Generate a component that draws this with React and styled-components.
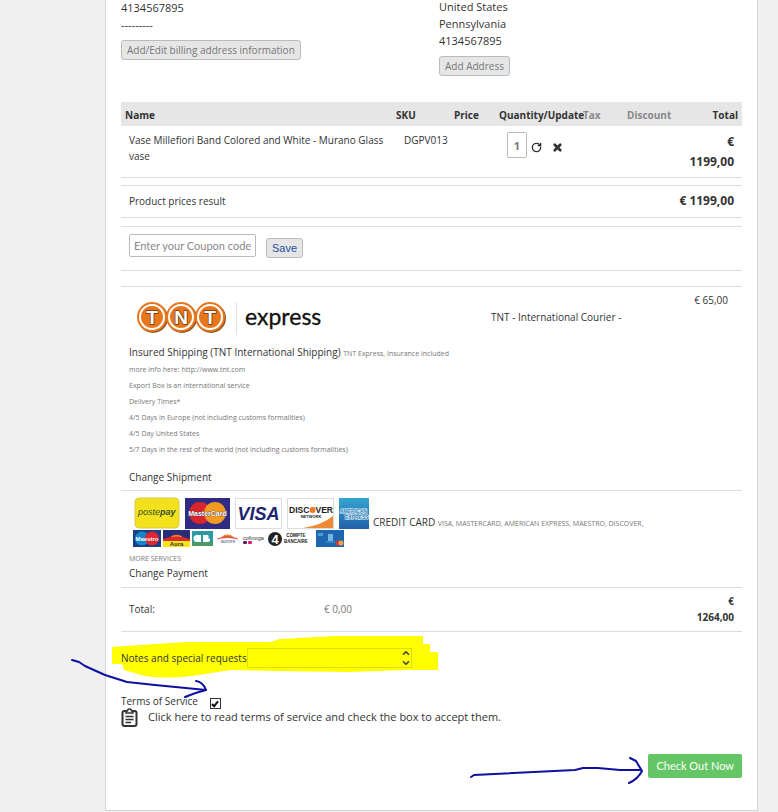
import React, { useState } from "react";
import styled, { createGlobalStyle } from "styled-components";
import { RotateCw, X, ChevronUp, ChevronDown } from "lucide-react";

const GlobalStyle = createGlobalStyle`
  * {
    box-sizing: border-box;
  }

  body {
    margin: 0;
    background: #f0f0f0;
    color: #333;
    font-family: "Open Sans", sans-serif;
    font-size: 10px;
    line-height: 16px;
  }
`;

const Panel = styled.main`
  margin: 0 20px 0 105px;
  padding: 0 15px 32px;
  background: #fff;
  border: 1px solid #d4d4d4;
  border-top: none;
`;

const Addresses = styled.section`
  display: grid;
  grid-template-columns: 1fr 1fr;
  gap: 15px;
  margin-top: -2px;
  padding-bottom: 26px;
  font-size: 11px;
  line-height: 17px;
`;

const Address = styled.address`
  font-style: normal;
  padding-top: ${(props) => (props.$lowered ? "1px" : "0")};
`;

const GrayButton = styled.button`
  display: block;
  height: 20px;
  margin-top: ${(props) => (props.$inline ? "4px" : "7px")};
  padding: 0 5px;
  border: 1px solid #bbb;
  border-radius: 3px;
  background: #e6e6e6;
  color: ${(props) => props.$color || "#777"};
  font-family: ${(props) =>
    props.$inline ? '"Liberation Sans", sans-serif' : '"Open Sans", sans-serif'};
  font-size: ${(props) => (props.$inline ? "11px" : "10px")};
  line-height: 18px;
`;

const Items = styled.table`
  width: 100%;
  table-layout: fixed;
  border-collapse: collapse;
  border-bottom: 1px solid #ddd;

  th {
    height: 24px;
    padding: 2px 4px 0;
    background: #e6e6e6;
    text-align: left;
    white-space: nowrap;
  }

  td {
    height: 51px;
    padding: 6px 8px 4px;
    vertical-align: top;
    line-height: 16px;
  }

  td:nth-child(2) {
    padding-left: 12px;
    padding-right: 0;
  }

  th:last-child,
  td:last-child {
    text-align: right;
  }
`;

const Th = styled.th`
  width: ${(props) => props.$width};
  color: ${(props) => (props.$muted ? "#888" : "#333")};
`;

const Price = styled.strong`
  display: block;
  font-size: 12px;
  line-height: 20px;
  white-space: ${(props) => (props.$wrap ? "normal" : "nowrap")};
`;

const Quantity = styled.div`
  display: flex;
  align-items: center;
  gap: 4px;
  padding-left: 4px;

  input {
    flex: none;
    width: 20px;
    height: 26px;
    padding: 0;
    border: 1px solid #bbb;
    border-radius: 2px;
    color: #777;
    font: bold 11px "Open Sans", sans-serif;
    text-align: center;
  }
`;

const IconButton = styled.button`
  display: flex;
  padding: 4px 0 0;
  margin-right: 6px;
  border: none;
  background: none;
  color: #333;
`;

const Row = styled.section`
  display: flex;
  justify-content: space-between;
  align-items: center;
  margin-top: ${(props) => props.$gap || "0"};
  padding: ${(props) => props.$padding || "0 8px"};
  min-height: ${(props) => props.$height};
  border-top: ${(props) => (props.$joined ? "none" : "1px solid #ddd")};
  border-bottom: 1px solid #ddd;
`;

const Coupon = styled.form`
  display: flex;
  align-items: flex-start;
  gap: 10px;

  input {
    width: 127px;
    height: 23px;
    padding: 0 4px;
    border: 1px solid #bbb;
    border-radius: 2px;
    font: 11px Lato, sans-serif;
  }

  input::placeholder {
    color: #888;
    opacity: 1;
  }
`;

const Shipment = styled.section`
  display: grid;
  grid-template-columns: 1fr 243px;
  margin-top: 15px;
  padding: 5px 8px;
  border-top: 1px solid #ddd;
  border-bottom: 1px solid #ddd;
`;

const Courier = styled.div`
  display: flex;
  justify-content: space-between;
  padding-right: 6px;

  span:first-child {
    padding-top: 17px;
  }
`;

const Logo = styled.svg`
  display: block;
  margin: 3px 0 7px;
`;

const Small = styled.small`
  color: #777;
  font-size: 7px;
  line-height: 1;
`;

const Details = styled.div`
  margin-bottom: 13px;
  white-space: nowrap;

  p {
    margin: 0;
  }
`;

const TextLink = styled.a`
  display: block;
  color: #333;
  line-height: 16px;
  text-decoration: none;
`;

const Payment = styled.section`
  padding: 6px 8px;
  border-bottom: 1px solid #ddd;
  line-height: 15px;
`;

const Method = styled.div`
  display: flex;
  align-items: center;
  gap: 4px;
  margin-bottom: 2px;
  padding-left: 4px;
  white-space: nowrap;
`;

const Totals = styled.div`
  display: grid;
  grid-template-columns: 223px 1fr;
  justify-items: end;
  flex: 1;
  align-items: center;

  div {
    display: flex;
    justify-content: space-between;
    width: 100%;
  }

  span {
    color: #777;
  }

  strong {
    width: 40px;
    text-align: right;
  }
`;

const Notes = styled.section`
  position: relative;
  display: flex;
  align-items: center;
  height: 20px;
  margin-top: 16px;

  label {
    position: relative;
  }
`;

const NotesField = styled.div`
  position: relative;
  width: 165px;
  height: 20px;

  textarea {
    display: block;
    width: 100%;
    height: 100%;
    padding: 2px 18px 2px 4px;
    border: 1px solid #e0e000;
    background: none;
    resize: none;
    overflow: hidden;
    font: 10px "Open Sans", sans-serif;
  }
`;

const Scroller = styled.span`
  position: absolute;
  top: 0;
  right: 1px;
  display: flex;
  flex-direction: column;
  color: #444;
`;

const Ink = styled.svg`
  position: absolute;
  left: ${(props) => props.$left};
  top: ${(props) => props.$top};
  pointer-events: none;
  overflow: visible;
`;

const Terms = styled.section`
  padding-top: 25px;
`;

const Agree = styled.div`
  display: flex;
  align-items: flex-start;
  gap: 12px;
  height: 15px;

  input {
    display: grid;
    place-items: center;
    appearance: none;
    width: 11px;
    height: 11px;
    margin: 5px 0 0;
    border: 1px solid #333;
    background: #fff;
  }

  input:checked::after {
    content: "";
    width: 2px;
    height: 5px;
    border: solid #111;
    border-width: 0 2px 2px 0;
    transform: rotate(40deg);
  }
`;

const TermsLink = styled.a`
  display: flex;
  align-items: center;
  gap: 10px;
  color: #333;
  font-size: 11px;
  line-height: 18px;
  text-decoration: none;
`;

const Actions = styled.div`
  position: relative;
  display: flex;
  justify-content: flex-end;
  margin-top: 27px;
`;

const CheckoutButton = styled.button`
  height: 24px;
  padding: 0 8px;
  border: none;
  border-radius: 2px;
  background: #64c664;
  color: #fff;
  font: 11px Lato, sans-serif;
`;

function ClipboardIcon() {
  return (
    <svg width="17" height="19" viewBox="0 0 17 19" fill="none" stroke="#333" strokeWidth="2" aria-hidden="true">
      <rect x="1.500" y="3" width="14" height="15" rx="2" />
      <path d="M5 5V3H6.500A2 2 0 0 1 10.500 3H12V5Z" fill="#fff" strokeWidth="1.500" />
      <path d="M4.500 8.500H12.500M4.500 11.500H12.500M4.500 14.500H10" strokeWidth="1.500" />
    </svg>
  );
}

function TntLogo() {
  return (
    <Logo width="200" height="42" viewBox="129 295 200 42" role="img" aria-label="TNT express">
      {[152, 181, 210].map((x) => (
        <g key={x}>
          <circle cx={x + 1} cy="318" r="15" fill="#8a5420" />
          <circle cx={x} cy="317" r="15" fill="#e8761c" />
          <circle cx={x} cy="317" r="12" fill="#e8761c" stroke="#fff" strokeWidth="2" />
        </g>
      ))}
      <g
        fontFamily="Liberation Sans, sans-serif"
        fontWeight="bold"
        fontSize="19"
        textAnchor="middle"
        fill="#fff"
        stroke="#6b3a12"
        strokeWidth="1.500"
        paintOrder="stroke"
      >
        <text x="152" y="324">T</text>
        <text x="181" y="324">N</text>
        <text x="210" y="324">T</text>
      </g>
      <path d="M236.500 302V335" stroke="#e2e2e2" />
      <text x="245" y="325" fontFamily="Lato, sans-serif" fontSize="23" fill="#111" stroke="#111" strokeWidth="0.300">
        express
      </text>
    </Logo>
  );
}

function CardLogos() {
  return (
    <svg width="236" height="51" viewBox="133 497 236 51" fontFamily="Liberation Sans, sans-serif" fontWeight="bold" role="img" aria-label="Accepted cards">
      <defs>
        <linearGradient id="amex" x1="0" y1="0" x2="0" y2="1">
          <stop offset="0" stopColor="#35a5d2" />
          <stop offset="1" stopColor="#2360a8" />
        </linearGradient>
      </defs>
      <rect x="135" y="498" width="44" height="30" rx="4" fill="#f2e11c" stroke="#d8cc48" />
      <text x="138" y="515" fontSize="9" fontStyle="italic" fill="#35502a">
        <tspan fontWeight="normal">poste</tspan>pay
      </text>

      <rect x="185" y="498" width="45" height="31" fill="#302c83" />
      <circle cx="200" cy="513" r="11" fill="#d9252d" />
      <circle cx="215" cy="513" r="11" fill="#f39a22" />
      <text x="207.500" y="516" fontSize="7" textAnchor="middle" fill="#fff" stroke="#302c50" strokeWidth="0.600" paintOrder="stroke">MasterCard</text>

      <rect x="235.500" y="498.500" width="46" height="30" fill="#fff" stroke="#ddd" />
      <text x="258.500" y="520" fontSize="18" fontStyle="italic" textAnchor="middle" fill="#20246e">VISA</text>

      <rect x="287.500" y="498.500" width="46" height="30" fill="#fff" stroke="#ddd" />
      <path d="M303 528Q322 525 333 516V528Z" fill="#ee8a35" />
      <text x="289" y="513" fontSize="8.500" fill="#222">DISC</text>
      <circle cx="312.500" cy="510" r="3" fill="#ee7a25" />
      <text x="315.500" y="513" fontSize="8.500" fill="#222">VER</text>
      <text x="311" y="518" fontSize="4" textAnchor="middle" fill="#222">NETWORK</text>

      <rect x="339" y="498" width="30" height="31" fill="url(#amex)" />
      <g fontSize="5" fill="#2b80ba" stroke="#e8f5fb" strokeWidth="1.200" paintOrder="stroke">
        <text x="340" y="513">AMERICAN</text>
        <text x="345" y="519">EXPRESS</text>
      </g>

      <rect x="133" y="530" width="28" height="17" fill="#1c3f86" />
      <circle cx="142" cy="538.500" r="7" fill="#1586cb" />
      <circle cx="152" cy="538.500" r="7" fill="#de2631" />
      <text x="147" y="541" fontSize="6" textAnchor="middle" fill="#fff">Maestro</text>

      <rect x="163" y="530" width="27" height="17" fill="#fae317" />
      <rect x="163" y="530" width="27" height="9" fill="#282d78" />
      <path d="M170 538A7 5 0 0 1 183 538Z" fill="#f47c25" />
      <path d="M163 539Q176 534 190 539V541H163Z" fill="#d92a2d" />
      <text x="176.500" y="546" fontSize="6" textAnchor="middle" fill="#333">Aura</text>

      <rect x="192" y="531" width="21" height="15" fill="#2c9aa3" />
      <rect x="192" y="542" width="21" height="4" fill="#4e9865" />
      <path d="M201 535H197A3 3 0 0 0 197 542H201ZM203 535H208A2 2 0 0 1 208 538A2 2 0 0 1 208 542H203Z" fill="#fff" />

      <path d="M222 537A6 4 0 0 1 233 537Z" fill="#f48a2c" />
      <path d="M217 539Q228 534 238 539Q228 536 217 539Z" fill="#d83b32" stroke="#d83b32" strokeWidth="0.500" />
      <text x="228" y="543" fontSize="5" fontWeight="normal" textAnchor="middle" fill="#557">aurore</text>

      <text x="243" y="540" fontSize="5.500" fontWeight="normal" fill="#333">cofinoga</text>
      <rect x="243" y="541" width="4" height="3" rx="1" fill="#632164" />
      <rect x="248" y="541" width="4" height="3" rx="1" fill="#e22271" />

      <circle cx="275" cy="539" r="7" fill="#222" />
      <text x="275" y="543.500" fontSize="13" textAnchor="middle" fill="#fff">4</text>
      <g fontSize="4.500" textAnchor="middle" fill="#222">
        <text x="296" y="537">COMPTE</text>
        <text x="296" y="543">BANCAIRE</text>
      </g>

      <rect x="316" y="530" width="28" height="17" fill="#1d67b0" />
      <rect x="318" y="533" width="5" height="3" fill="#4e9cd0" />
      <rect x="328" y="534" width="5" height="7" fill="#78b5e2" />
      <path d="M326 542H335" stroke="#4e9cd0" />
      <circle cx="338" cy="543" r="2.500" fill="#d7353c" />
      <circle cx="341" cy="543" r="2.500" fill="#eda43a" />
    </svg>
  );
}

function NotesHighlight() {
  return (
    <Ink $left="-9px" $top="-12px" width="326" height="42" viewBox="112 636 326 42">
      <path
        d="M112 647L185 642H270L280 639L335 636H423V644H430V652H438V670H405L350 672L275 671L230 670L205 674Q170 680 145 676L124 670L122 664H112Z"
        fill="#ff0"
      />
    </Ink>
  );
}

export default function App() {
  const [accepted, setAccepted] = useState(true);
  const [quantity, setQuantity] = useState("1");

  return (
    <>
      <GlobalStyle />
      <Panel>
        <Addresses>
          <Address $lowered>
            <div>4134567895</div>
            <div>---------</div>
            <GrayButton>Add/Edit billing address information</GrayButton>
          </Address>
          <Address>
            <div>United States</div>
            <div>Pennsylvania</div>
            <div>4134567895</div>
            <GrayButton>Add Address</GrayButton>
          </Address>
        </Addresses>

        <Items>
          <thead>
            <tr>
              <Th>Name</Th>
              <Th $width="58px">SKU</Th>
              <Th $width="45px">Price</Th>
              <Th $width="84px">Quantity/Update</Th>
              <Th $width="44px" $muted>Tax</Th>
              <Th $width="58px" $muted>Discount</Th>
              <Th $width="61px">Total</Th>
            </tr>
          </thead>
          <tbody>
            <tr>
              <td>Vase Millefiori Band Colored and White - Murano Glass vase</td>
              <td>DGPV013</td>
              <td />
              <td>
                <Quantity>
                  <input
                    aria-label="Quantity"
                    value={quantity}
                    onChange={(e) => setQuantity(e.target.value)}
                  />
                  <IconButton aria-label="Update quantity">
                    <RotateCw size={11} strokeWidth={3} />
                  </IconButton>
                  <IconButton aria-label="Remove item">
                    <X size={11} strokeWidth={6} />
                  </IconButton>
                </Quantity>
              </td>
              <td />
              <td />
              <td>
                <Price $wrap>€ 1199,00</Price>
              </td>
            </tr>
          </tbody>
        </Items>

        <Row $gap="7px" $height="33px">
          <span>Product prices result</span>
          <Price>€ 1199,00</Price>
        </Row>

        <Row $gap="8px" $height="45px" $padding="7px 8px 12px">
          <Coupon onSubmit={(e) => e.preventDefault()}>
            <input aria-label="Coupon code" placeholder="Enter your Coupon code" />
            <GrayButton $inline $color="#1f4f9f">Save</GrayButton>
          </Coupon>
        </Row>

        <Shipment>
          <div>
            <TntLogo />
            <Details>
              <p>
                Insured Shipping (TNT International Shipping){" "}
                <Small>TNT Express, Insurance included</Small>
              </p>
              <p><Small>more info here: http://www.tnt.com</Small></p>
              <p><Small>Export Box is an international service</Small></p>
              <p><Small>Delivery Times*</Small></p>
              <p><Small>4/5 Days in Europe (not including customs formalities)</Small></p>
              <p><Small>4/5 Day United States</Small></p>
              <p><Small>5/7 Days in the rest of the world (not including customs formalities)</Small></p>
            </Details>
            <TextLink href="#shipment">Change Shipment</TextLink>
          </div>
          <Courier>
            <span>TNT - International Courier -</span>
            <span>€ 65,00</span>
          </Courier>
        </Shipment>

        <Payment>
          <Method>
            <CardLogos />
            <span>
              CREDIT CARD <Small>VISA, MASTERCARD, AMERICAN EXPRESS, MAESTRO, DISCOVER,</Small>
            </span>
          </Method>
          <Small>MORE SERVICES</Small>
          <TextLink href="#payment">Change Payment</TextLink>
        </Payment>

        <Row $joined $height="44px">
          <Totals>
            <div>
              Total: <span>€ 0,00</span>
            </div>
            <strong>€ 1264,00</strong>
          </Totals>
        </Row>

        <Notes>
          <NotesHighlight />
          <label htmlFor="notes">Notes and special requests</label>
          <NotesField>
            <textarea id="notes" />
            <Scroller aria-hidden="true">
              <ChevronUp size={10} strokeWidth={4} />
              <ChevronDown size={10} strokeWidth={4} />
            </Scroller>
          </NotesField>
          <Ink $left="-50px" $top="11px" width="137" height="40" viewBox="71 659 137 40" fill="none" stroke="#1010a0" strokeWidth="2" strokeLinecap="round" strokeLinejoin="round">
            <path d="M72 660L79 662L85 666L105 675L127 682L155 685L206 690" />
            <path d="M196 681Q203 682 206 690Q194 693 185 697" />
          </Ink>
        </Notes>

        <Terms>
          <Agree>
            <label htmlFor="terms">Terms of Service</label>
            <input
              id="terms"
              type="checkbox"
              checked={accepted}
              onChange={(e) => setAccepted(e.target.checked)}
            />
          </Agree>
          <TermsLink href="#terms-of-service">
            <ClipboardIcon />
            Click here to read terms of service and check the box to accept them.
          </TermsLink>
        </Terms>

        <Actions>
          <CheckoutButton>Check Out Now</CheckoutButton>
          <Ink $left="349px" $top="3px" width="174" height="28" viewBox="470 757 174 28" fill="none" stroke="#1010a0" strokeWidth="2" strokeLinecap="round" strokeLinejoin="round">
            <path d="M471 777L474 775L575 770L583 768H598L620 770H641" />
            <path d="M630 758L636 761L642 771Q638 779 629 783" />
          </Ink>
        </Actions>
      </Panel>
    </>
  );
}
